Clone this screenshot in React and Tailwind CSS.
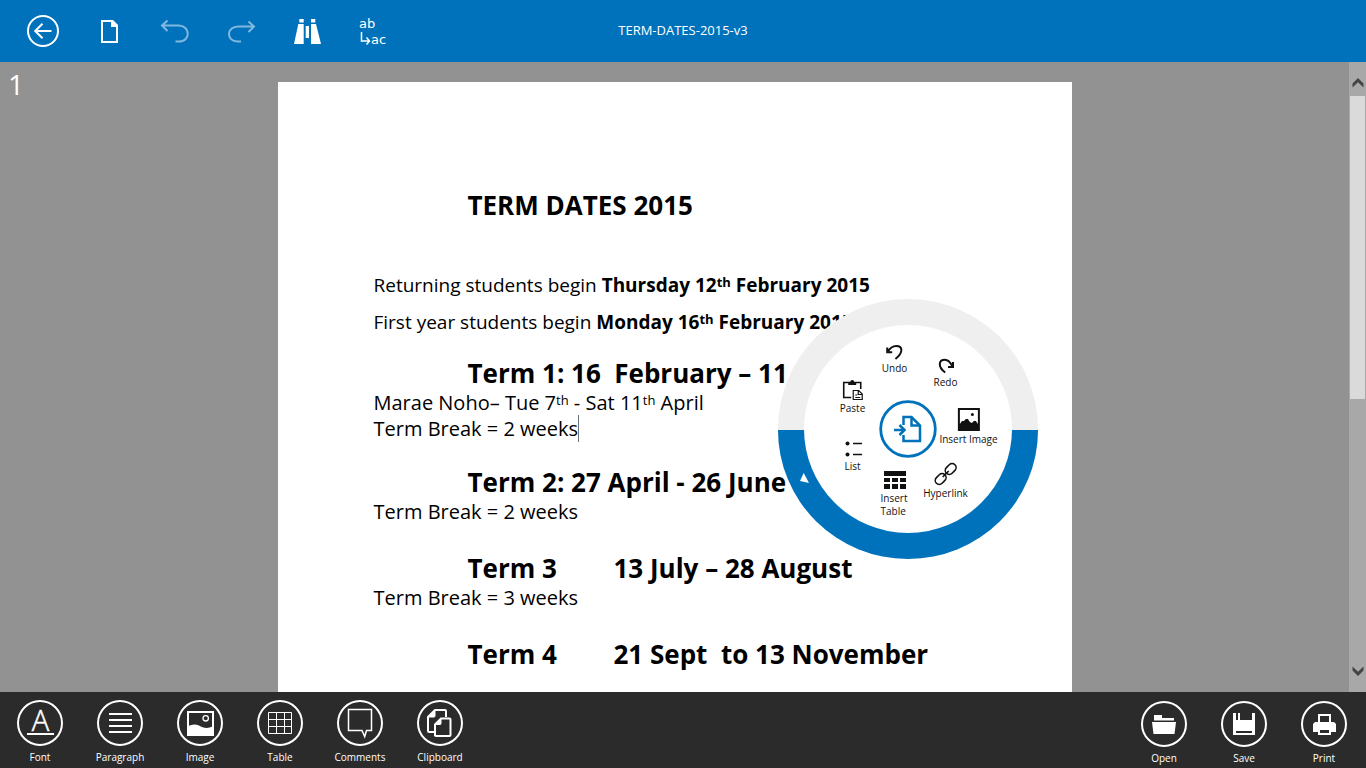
import React from "react";

const SANS = "font-['Open_Sans','Noto_Sans',sans-serif]";

/* ---------- top bar ---------- */

function ToolIcon({ children }) {
  return (
    <svg viewBox="0 0 40 40" className="h-10 w-10" fill="none" stroke="currentColor" strokeWidth="2" aria-hidden="true">
      {children}
    </svg>
  );
}

const tools = [
  {
    label: "Back",
    icon: (
      <>
        <circle cx="20" cy="20" r="15" />
        <path d="M28.5 20H12.5M19.5 12.7L12.2 20l7.3 7.3" />
      </>
    ),
  },
  {
    label: "New document",
    icon: (
      <>
        <path d="M13 10h10l5 5v16H13z" />
        <path d="M22 9h2l5 5v2h-7z" fill="currentColor" stroke="none" />
      </>
    ),
  },
  {
    label: "Undo last change",
    disabled: true,
    icon: <path d="M12.5 9.5L7 14.5l5.5 5.5M7 14.5h16.500C35.500 14.500 36 30.500 24 30.500H20.500" />,
  },
  {
    label: "Redo last change",
    disabled: true,
    icon: <path d="M27.500 10.500L33 15.500l-5.500 5.500M33 15.500H17.500C5 15.500 5 30.500 16.500 30.500H20" />,
  },
  {
    label: "Find",
    icon: (
      <g fill="currentColor" stroke="none">
        <path d="M7 33l4.300-20h5.400v20zM12.300 8h4.400v3.500h-4.400zM18.700 15h3.300v12h-3.300zM24 13h5l5 20H24zM24 8h4.300v3.500H24z" />
      </g>
    ),
  },
  {
    label: "Replace",
    icon: (
      <>
        <g fill="currentColor" stroke="none" fontSize="13" fontFamily="DejaVu Sans, sans-serif">
          <text x="6" y="17">ab</text>
          <text x="18" y="33">ac</text>
        </g>
        <path d="M8.500 21v9H16M13.500 26.500l3 3.500-3 3.500" strokeWidth="1.500" />
      </>
    ),
  },
];

/* ---------- bottom bar ---------- */

const editActions = [
  {
    label: "Font",
    icon: (
      <>
        <text x="23.500" y="31" textAnchor="middle" fontSize="29" fontWeight="300" fontFamily="Open Sans, sans-serif" fill="currentColor" stroke="currentColor" strokeWidth=".5">A</text>
        <path d="M10 34h27" />
      </>
    ),
  },
  { label: "Paragraph", icon: <path d="M12 14h23M12 20h23M12 26h23M12 32h23" /> },
  {
    label: "Image",
    icon: (
      <>
        <path d="M11 12h25v23H11z" />
        <circle cx="28.700" cy="18.300" r="2.700" strokeWidth="1.300" />
        <path d="M11 26c4-1.500 7-2.500 11-.500s8 4 14 .5v9H11z" fill="currentColor" stroke="none" />
      </>
    ),
  },
  {
    label: "Table",
    icon: <path d="M11.500 12.500h23v21h-23zM19.500 12.500v21M27.500 12.500v21M11.500 19.500h23M11.500 26.500h23" strokeWidth="1" />,
  },
  { label: "Comments", icon: <path d="M11.500 9.500h23v21h-5l-1.800 6-2.700-6H11.500z" strokeWidth="1.500" /> },
  {
    label: "Clipboard",
    icon: (
      <>
        <path d="M17 32h-5q-1 0-1-1V17l7-7h10q1 0 1 1v6M18 36V24.500l6-6h8.500q1 0 1 1V35q0 1-1 1H19q-1 0-1-1" />
        <path d="M11 17l7-7v6q0 1-1 1zM18 24.500l6-6v5q0 1-1 1z" fill="currentColor" strokeWidth="1" />
      </>
    ),
  },
];

const fileActions = [
  {
    label: "Open",
    icon: <path d="M13 14h8v3h12v2.500H13zM11 21h24l-1.500 12h-21z" fill="currentColor" stroke="none" />,
  },
  {
    label: "Save",
    icon: (
      <path
        d="M12 12h3v7h2v-7h2v7h12v-7h3v22H12zM15 30v2h16v-2z"
        fill="currentColor"
        fillRule="evenodd"
        stroke="none"
      />
    ),
  },
  {
    label: "Print",
    icon: (
      <>
        <path d="M18 22v-8h11v8" />
        <path
          d="M12 23l2-2h19l2 2v8h-5v3H17v-3h-5zM19 29v3h9v-3z"
          fill="currentColor"
          fillRule="evenodd"
          stroke="none"
        />
      </>
    ),
  },
];

function BarButton({ label, icon }) {
  return (
    <button type="button" className="flex w-20 flex-col items-center gap-1 text-[10px] leading-[14px] text-white">
      <svg viewBox="0 0 46 46" className="h-[46px] w-[46px]" fill="none" stroke="currentColor" strokeWidth="2" aria-hidden="true">
        <circle cx="23" cy="23" r="22" />
        {icon}
      </svg>
      {label}
    </button>
  );
}

/* ---------- radial menu ---------- */

const radialItems = [
  {
    label: "Undo",
    place: "left-[117px] top-[39px]",
    icon: <path d="M5 9.500V14.300H10M5.500 14C8 9.500 11 8 14 8c6.500 0 7.500 6.500-.800 13" strokeWidth="2" />,
  },
  {
    label: "Redo",
    place: "left-[168px] top-[53px]",
    icon: <path d="M19 10v5h-5M18.500 14.500C16 9.500 14 7.700 11 7.700c-6.500 0-7.500 7 .200 12.800" strokeWidth="2" />,
  },
  {
    label: "Insert Image",
    place: "left-[191px] top-[110px]",
    icon: (
      <>
        <path
          d="M1-1h22v23H1zM3 1v14l2-3 2 0 2-2 2 0 2 3 2 1 2-2 2 0 2 3V1z"
          fill="currentColor"
          fillRule="evenodd"
          stroke="none"
        />
        <circle cx="15.500" cy="5.500" r="1.500" fill="currentColor" stroke="none" />
      </>
    ),
  },
  {
    label: "Hyperlink",
    place: "left-[168px] top-[164px]",
    icon: (
      <>
        <rect x="-6" y="-4" width="12" height="8" rx="4" transform="translate(17 6) rotate(-45)" />
        <rect x="-6" y="-4" width="12" height="8" rx="4" transform="translate(7 16) rotate(-45)" />
        <path d="M9 14l6-6" />
      </>
    ),
  },
  {
    label: "Insert Table",
    place: "left-[117px] top-[169px]",
    narrow: true,
    icon: (
      <path
        d="M1 3h22v5H1zM1 10h6v4H1zM9 10h6v4H9zM17 10h6v4h-6zM1 16h6v5H1zM9 16h6v5H9zM17 16h6v5h-6z"
        fill="currentColor"
        stroke="none"
      />
    ),
  },
  {
    label: "List",
    place: "left-[75px] top-[137px]",
    icon: (
      <>
        <path d="M12 7.500h9M12 18.500h9" />
        <circle cx="6.500" cy="7.500" r="2" fill="currentColor" stroke="none" />
        <circle cx="6.500" cy="18.500" r="2" fill="currentColor" stroke="none" />
      </>
    ),
  },
  {
    label: "Paste",
    place: "left-[75px] top-[79px]",
    icon: (
      <>
        <path d="M11 19.500H3.500v-15h17V11" />
        <path d="M8 7h8V4h-2a2 2 0 0 0-4 0H8z" fill="currentColor" stroke="none" />
        <path d="M13 12.500h5.500l3.500 3.500v5.500h-9zM18 12.500v4h4M15 17h2M15 19.500h5" strokeWidth="1.200" />
      </>
    ),
  },
];

function RadialMenu() {
  return (
    <div className="absolute left-[500px] top-[217px] h-[260px] w-[260px] text-[#111111]" role="menu" aria-label="Quick actions">
      <svg viewBox="0 0 260 260" className="h-full w-full" aria-hidden="true">
        <circle cx="130" cy="130" r="130" fill="#efefef" />
        <path d="M0 131a130 129 0 0 0 260 0z" fill="#0072bc" />
        <circle cx="130" cy="130" r="104" fill="#ffffff" />
        <path d="M25.700 174L22 182l9 2z" fill="#ffffff" />
      </svg>
      {radialItems.map((item) => (
        <button
          key={item.label}
          type="button"
          role="menuitem"
          className={`absolute flex -translate-x-1/2 flex-col items-center text-[10px] leading-[13px] ${item.place}`}
        >
          <svg viewBox="0 0 24 24" className="h-6 w-6 overflow-visible" fill="none" stroke="currentColor" strokeWidth="1.600" aria-hidden="true">
            {item.icon}
          </svg>
          <span className={item.narrow ? "w-7 text-left" : "whitespace-nowrap"}>{item.label}</span>
        </button>
      ))}
      <button type="button" role="menuitem" aria-label="Insert" className="absolute left-[101px] top-[101px] h-[58px] w-[58px] text-[#0072bc]">
        <svg viewBox="0 0 58 58" className="h-full w-full" fill="none" stroke="currentColor" strokeWidth="2.500" aria-hidden="true">
          <circle cx="29" cy="29" r="27.300" strokeWidth="2.800" />
          <path d="M24.500 25v-8h8l8.500 8.500V41H24.500v-6" />
          <path d="M32.500 17v8.500H41" />
          <path d="M15 30h11M20.500 25l5 5-5 5" />
        </svg>
      </button>
    </div>
  );
}

/* ---------- document ---------- */

function Sup({ children }) {
  return <sup className="top-0 align-[5px] text-[13px] leading-none">{children}</sup>;
}

function TermHeading({ children }) {
  return <h2 className="mb-px flex whitespace-pre pl-[94px] text-[26px] font-bold leading-8">{children}</h2>;
}

function Paper() {
  return (
    <article className="relative mx-auto min-h-[1123px] w-full max-w-[794px] bg-white px-24 pt-[107px] text-[20px] leading-[26px] text-black">
      <h1 className="pl-[94px] text-[26px] font-bold leading-8">TERM DATES 2015</h1>
      <div className="mt-[51px] space-y-[11px] text-[19px]">
        <p>
          Returning students begin <b>Thursday 12<Sup>th</Sup> February 2015</b>
        </p>
        <p>
          First year students begin <b>Monday 16<Sup>th</Sup> February 2015</b>
        </p>
      </div>
      <section className="mb-6 mt-[22px]">
        <TermHeading>{"Term 1: 16  February – 11"}</TermHeading>
        <p>
          Marae Noho– Tue 7<Sup>th</Sup> - Sat 11<Sup>th</Sup> April
        </p>
        <p>
          <span className="border-r border-gray-500">Term Break = 2 weeks</span>
        </p>
      </section>
      <div className="space-y-[27px]">
        <section>
          <TermHeading>Term 2: 27 April - 26 June</TermHeading>
          <p>Term Break = 2 weeks</p>
        </section>
        <section>
          <TermHeading>
            <span className="w-[146px]">Term 3</span>
            <span>13 July – 28 August</span>
          </TermHeading>
          <p>Term Break = 3 weeks</p>
        </section>
        <section>
          <TermHeading>
            <span className="w-[146px]">Term 4</span>
            <span>{"21 Sept  to 13 November"}</span>
          </TermHeading>
        </section>
      </div>
      <RadialMenu />
    </article>
  );
}

function ScrollBar() {
  return (
    <div className="flex w-[17px] shrink-0 flex-col bg-[#a8a8a8] text-[#444444]">
      <button type="button" aria-label="Scroll up" className="flex h-[34px] items-end justify-center pb-2">
        <svg viewBox="0 0 12 10" className="h-[10px] w-3" fill="currentColor" aria-hidden="true">
          <path d="M6 0l5.500 5.500V9.500L6 4.200.5 9.500V5.500z" />
        </svg>
      </button>
      <div className="flex-1 px-px">
        <div className="h-[54%] bg-[#dadada]" />
      </div>
      <button type="button" aria-label="Scroll down" className="flex h-[34px] items-start justify-center pt-2">
        <svg viewBox="0 0 12 10" className="h-[10px] w-3" fill="currentColor" aria-hidden="true">
          <path d="M6 10l5.500-5.500V.5L6 5.800.5.5v4z" />
        </svg>
      </button>
    </div>
  );
}

export default function App() {
  return (
    <div className={`flex h-screen flex-col overflow-hidden ${SANS}`}>
      <header className="grid h-[62px] shrink-0 grid-cols-[1fr_auto_1fr] items-center bg-[#0072bc] text-white">
        <nav className="flex pl-[10px]">
          {tools.map((tool) => (
            <button
              key={tool.label}
              type="button"
              aria-label={tool.label}
              disabled={tool.disabled}
              className="flex w-[66px] justify-center disabled:text-[#80b8de]"
            >
              <ToolIcon>{tool.icon}</ToolIcon>
            </button>
          ))}
        </nav>
        <span className="text-[13px]">TERM-DATES-2015-v3</span>
      </header>

      <main className="flex min-h-0 flex-1 bg-[#929292]">
        <div className="relative min-w-0 flex-1 overflow-hidden pt-5">
          <span className="absolute left-2 top-1 text-[28px] leading-9 text-white">1</span>
          <Paper />
        </div>
        <ScrollBar />
      </main>

      <footer className="flex h-[76px] shrink-0 justify-between bg-[#2b2b2b]">
        <div className="flex pt-2">
          {editActions.map((action) => (
            <BarButton key={action.label} {...action} />
          ))}
        </div>
        <div className="flex pr-0.5 pt-[9px]">
          {fileActions.map((action) => (
            <BarButton key={action.label} {...action} />
          ))}
        </div>
      </footer>
    </div>
  );
}
